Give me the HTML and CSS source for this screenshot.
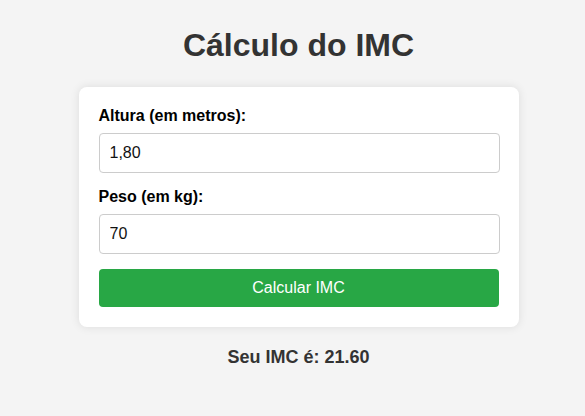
FILE: index.html
```html
<!DOCTYPE html>
<html lang="pt">
<head>
<meta charset="utf-8">
<title>Cálculo do IMC</title>
<link rel="stylesheet" href="styles.css">
</head>
<body>
  <h1 class="title">Cálculo do IMC</h1>
  <div class="card">
    <label class="label" for="altura">Altura (em metros):</label>
    <input class="field" id="altura" type="text" value="1,80">
    <label class="label" for="peso">Peso (em kg):</label>
    <input class="field" id="peso" type="text" value="70">
    <button class="btn" type="button">Calcular IMC</button>
  </div>
  <p class="result">Seu IMC é: 21.60</p>
</body>
</html>
```
FILE: styles.css
```css
html, body {
  margin: 0;
  padding: 0;
}
body {
  background: #f4f4f4;
  font-family: "Liberation Sans", Arial, sans-serif;
  display: flex;
  flex-direction: column;
  align-items: center;
  padding-top: 27px;
  padding-left: 12px;
  color: #333;
}
.title {
  margin: 0 0 23px;
  font-size: 32px;
  line-height: 37px;
  color: #333;
  font-weight: bold;
}
.card {
  width: 400px;
  padding: 20px;
  background: #fff;
  border-radius: 8px;
  box-shadow: 0 0 10px rgba(0, 0, 0, 0.1);
  display: flex;
  flex-direction: column;
}
.label {
  display: block;
  font-size: 16px;
  line-height: 18px;
  font-weight: bold;
  color: #000;
  margin-bottom: 8px;
}
.field {
  box-sizing: border-box;
  width: 401px;
  height: 40px;
  padding: 10px;
  font-family: "Liberation Sans", Arial, sans-serif;
  font-size: 16px;
  color: #111;
  border: 1px solid #ccc;
  border-radius: 4px;
  margin: 0 0 15px;
  background: #fff;
}
.btn {
  box-sizing: border-box;
  width: 400px;
  height: 38px;
  border: none;
  border-radius: 4px;
  background: #28a745;
  color: #fff;
  font-family: "Liberation Sans", Arial, sans-serif;
  font-size: 16px;
  cursor: pointer;
}
.result {
  margin: 20px 0 0;
  font-size: 18px;
  line-height: 21px;
  font-weight: bold;
  color: #333;
}
```
